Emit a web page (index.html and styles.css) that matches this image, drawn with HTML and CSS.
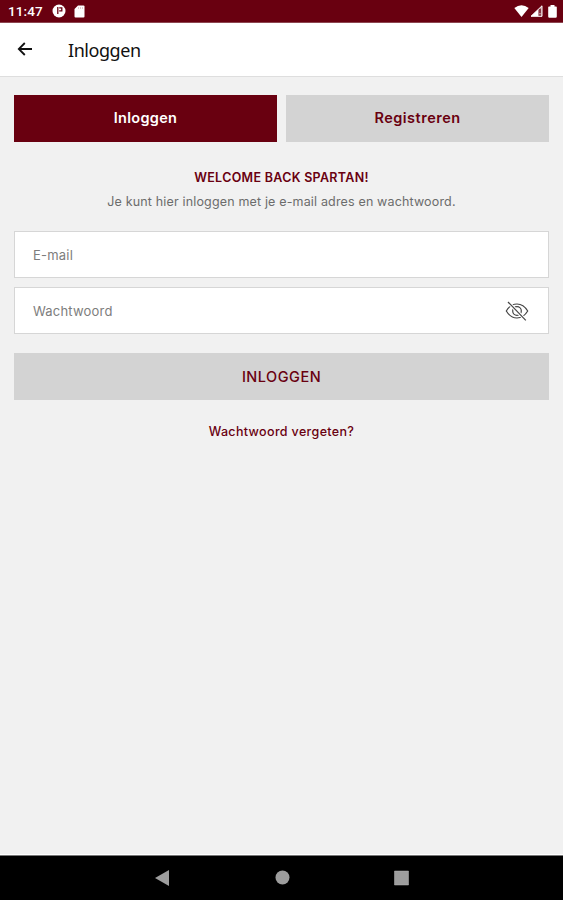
FILE: index.html
```html
<!DOCTYPE html>
<html lang="nl">
<head>
<meta charset="utf-8">
<title>Inloggen</title>
<link rel="stylesheet" href="styles.css">
</head>
<body>
<div class="status">
  <span class="time">11:47</span>
  <svg class="app-icon" width="14" height="14" viewBox="0 0 14 14"><circle cx="7" cy="7" r="6.500" fill="#fff"/><path d="M5.800 3v7M7.200 3.800h2.600v3H7.200" fill="none" stroke="#690010" stroke-width="1.300"/></svg>
  <svg width="11" height="13" viewBox="0 0 11 13"><path d="M4 .5h5.500q1 0 1 1v10q0 1-1 1h-8q-1 0-1-1V4z" fill="#fff"/><path d="M4.500 2v2M6.500 2v2M8.500 2v2" stroke="#d9b5ba" stroke-width=".7"/></svg>
  <div class="signals">
    <svg width="15" height="12" viewBox="0 0 15 12"><path d="M.3 3.100Q7.500-2.800 14.700 3.100L7.500 12z" fill="#fff"/></svg>
    <svg width="13" height="12" viewBox="0 0 13 12"><path d="M1 11.300 12 .8v10.500z" fill="#b98790" stroke="#fff" stroke-width="1"/><path d="M8 4.700V11H1.300z" fill="#fff"/><path d="M10 4v4M10 9.300v1.400" stroke="#690010" stroke-width="1.200"/></svg>
    <svg class="battery" width="9" height="13" viewBox="0 0 9 13"><path d="M2.500 1.500V0h4v1.500H8q.8 0 .8.8v9.200q0 1.200-1.200 1.200H1.400q-1.200 0-1.200-1.200V2.300q0-.8.8-.8z" fill="#fff"/></svg>
  </div>
</div>
<header class="bar">
  <svg width="16" height="14" viewBox="0 0 16 14"><path d="M15 7H1.800M7.800 1 1.800 7l6 6" fill="none" stroke="#111" stroke-width="1.800"/></svg>
  <h1 class="title">Inloggen</h1>
</header>
<main class="content">
  <div class="tabs">
    <button class="tab active">Inloggen</button>
    <button class="tab register">Registreren</button>
  </div>
  <h2 class="welcome">WELCOME BACK SPARTAN!</h2>
  <p class="intro">Je kunt hier inloggen met je e-mail adres en wachtwoord.</p>
  <div class="field"><span>E-mail</span></div>
  <div class="field"><span>Wachtwoord</span>
    <svg width="24" height="20" viewBox="0 0 24 20" fill="none" stroke="#444" stroke-width="1.200"><path d="M1.300 10Q5.500 3 12 3t10.700 7Q18.500 17 12 17T1.300 10z"/><circle cx="12" cy="10" r="4.300"/><path d="M3.200 1.200 20.600 19.200" stroke="#fff" stroke-width="3.200"/><path d="M3 1 20.800 19.300"/></svg>
  </div>
  <button class="submit">INLOGGEN</button>
  <a class="forgot">Wachtwoord vergeten?</a>
</main>
<nav class="nav">
  <svg width="15" height="16" viewBox="0 0 15 16"><path d="M0 8 14 0v16z" fill="#9d9d9d"/></svg>
  <svg width="15" height="16" viewBox="0 0 15 16"><circle cx="7.500" cy="7.500" r="7" fill="#9d9d9d"/></svg>
  <svg width="15" height="16" viewBox="0 0 15 16"><path d="M.5 1h14v14H.5z" fill="#9d9d9d" stroke="#b5b5b5" stroke-width=".5"/></svg>
</nav>
</body>
</html>
```
FILE: styles.css
```css
* { box-sizing: border-box; }
body {
  margin: 0;
  height: 900px;
  display: flex;
  flex-direction: column;
  background: #f1f1f1;
  font-family: Inter, "Liberation Sans", sans-serif;
  overflow: hidden;
}
svg { display: block; flex: none; }
.status {
  height: 23px;
  padding: 0 6px 0 8px;
  display: flex;
  align-items: center;
  background: #690010;
  border-bottom: 1px solid #8d4650;
  color: #fff;
}
.time { width: 44px; font: 500 13.5px/20px Roboto, sans-serif; letter-spacing: .1px; }
.app-icon { margin-right: 8px; }
.signals { margin-left: auto; display: flex; align-items: center; gap: 1px; }
.battery { margin-left: 4px; }
.bar {
  height: 54px;
  padding: 0 17px 1px;
  display: flex;
  align-items: center;
  gap: 35px;
  background: #fff;
  border-bottom: 1px solid #dedede;
}
.title { margin: 2px 0 0; font: 400 18px/26px "Noto Sans", sans-serif; letter-spacing: -.45px; color: #111; }
.content {
  flex: 1;
  padding: 18px 14px 0;
  display: flex;
  flex-direction: column;
  border-bottom: 1px solid #fff;
}
.tabs { display: grid; grid-template-columns: 263px 263px; gap: 9px; }
.tab, .submit {
  height: 47px;
  padding: 0 0 1px;
  border: 0;
  background: #d3d3d3;
  color: #690010;
  font: 600 14.5px/20px Inter, sans-serif;
  letter-spacing: .3px;
}
.tab.active { background: #690010; color: #fff; }
.tab.register { letter-spacing: .5px; }
.welcome {
  margin: 27px 0 0;
  text-align: center;
  font-size: 12.5px;
  line-height: 18px;
  font-weight: 600;
  letter-spacing: .3px;
  color: #690010;
}
.intro {
  margin: 6px 0 0;
  text-align: center;
  font-size: 12.5px;
  line-height: 18px;
  letter-spacing: .16px;
  color: #6c6c6c;
}
.field {
  height: 47px;
  margin-bottom: 9px;
  padding: 0 19px 0 18px;
  display: flex;
  align-items: center;
  justify-content: space-between;
  background: #fff;
  border: 1px solid #d6d6d6;
  color: #7d7d7d;
  font-size: 13px;
  letter-spacing: .2px;
}
.intro + .field { margin-top: 20px; }
.submit { margin-top: 10px; padding: 1px 0 0; font-weight: 500; letter-spacing: .5px; }
.forgot {
  margin-top: 23px;
  text-align: center;
  font-size: 12.5px;
  line-height: 18px;
  font-weight: 500;
  letter-spacing: .35px;
  color: #690010;
}
.nav {
  height: 45px;
  padding-left: 155px;
  display: flex;
  align-items: center;
  gap: 104.5px;
  background: #000;
  border-top: 1px solid #777;
}
```
